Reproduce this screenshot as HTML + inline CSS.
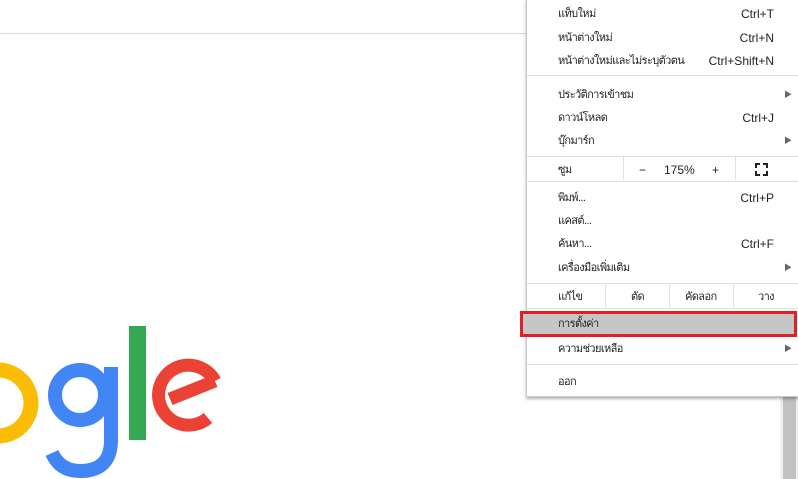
<!DOCTYPE html>
<html><head><meta charset="utf-8"><style>
body{margin:0;width:798px;height:479px;overflow:hidden;background:#fff;position:relative;font-family:"Liberation Sans","Noto Sans CJK SC",sans-serif;font-size:11px;color:#222}
.hl{position:absolute;left:0;top:33px;width:526px;height:1px;background:#dadada}
.sb{position:absolute;left:780px;top:396px;width:18px;height:83px;background:#f0f0f0}
.sb div{position:absolute;left:3px;top:0;width:13px;height:83px;background:#c1c1c1}
.menu{position:absolute;left:526px;top:-1px;width:271px;height:396px;background:#fff;border:1px solid #c8c8c8;box-shadow:0 2px 3px rgba(0,0,0,.3)}
.r{position:absolute;left:31px;right:24px;height:20px;line-height:20px;letter-spacing:-0.6px}
.r .k{position:absolute;right:0;top:0;font-size:12px;letter-spacing:0}
.ar{position:absolute;right:-18px;top:0;font-size:8px;color:#666;letter-spacing:0}
.sep{position:absolute;left:0;right:0;height:1px;background:#e0e0e0}
.vd{position:absolute;width:1px;height:23px;background:#e0e0e0}
.t{position:absolute;line-height:20px;letter-spacing:-0.6px}
.sel{position:absolute;left:520px;top:311px;width:271px;height:20px;border:3px solid #e31e24;background:#c6c6c6}
</style></head><body>
<div class="hl"></div>
<svg style="position:absolute;left:0;top:0" width="240" height="479">
<circle cx="-2" cy="403" r="33" fill="none" stroke="#fbbc05" stroke-width="15"/>
<circle cx="80" cy="395" r="25" fill="none" stroke="#4285f4" stroke-width="14"/>
<path d="M111 367 V440 Q111 471 80 471 Q60 471 52 453" fill="none" stroke="#4285f4" stroke-width="14"/>
<rect x="129" y="326" width="17" height="114" fill="#34a853"/>
<path d="M215 381 L170 399 M208 418 A30 30 0 1 1 215 381" fill="none" stroke="#ea4335" stroke-width="13"/>
</svg>
<div class="sb"><div></div></div>
<div class="menu">
<div class="r" style="top:4px">แท็บใหม่<span class="k">Ctrl+T</span></div>
<div class="r" style="top:28px">หน้าต่างใหม่<span class="k">Ctrl+N</span></div>
<div class="r" style="top:51px">หน้าต่างใหม่และไม่ระบุตัวตน<span class="k">Ctrl+Shift+N</span></div>
<div class="sep" style="top:75px"></div>
<div class="r" style="top:85px">ประวัติการเข้าชม<span class="ar">▶</span></div>
<div class="r" style="top:108px">ดาวน์โหลด<span class="k">Ctrl+J</span></div>
<div class="r" style="top:131px">บุ๊กมาร์ก<span class="ar">▶</span></div>
<div class="sep" style="top:156px"></div>
<div class="r" style="top:160px">ซูม</div>
<div class="vd" style="left:96px;top:157px"></div>
<div class="vd" style="left:208px;top:157px"></div>
<div style="position:absolute;left:112px;top:160px;line-height:20px;font-size:12px">−</div>
<div style="position:absolute;left:137px;top:160px;line-height:20px;font-size:12px">175%</div>
<div style="position:absolute;left:185px;top:160px;line-height:20px;font-size:12px">+</div>
<svg style="position:absolute;left:228px;top:163px" width="13" height="13"><path d="M1 5V1H5M8 1H12V5M12 8V12H8M5 12H1V8" fill="none" stroke="#222" stroke-width="2"/></svg>
<div class="sep" style="top:181px"></div>
<div class="r" style="top:188px">พิมพ์...<span class="k">Ctrl+P</span></div>
<div class="r" style="top:211px">แคสต์...</div>
<div class="r" style="top:234px">ค้นหา...<span class="k">Ctrl+F</span></div>
<div class="r" style="top:258px">เครื่องมือเพิ่มเติม<span class="ar">▶</span></div>
<div class="sep" style="top:283px"></div>
<div class="r" style="top:287px">แก้ไข</div>
<div class="vd" style="left:78px;top:284px"></div>
<div class="vd" style="left:142px;top:284px"></div>
<div class="vd" style="left:206px;top:284px"></div>
<div class="t" style="left:104px;top:287px">ตัด</div>
<div class="t" style="left:158px;top:287px">คัดลอก</div>
<div class="t" style="left:231px;top:287px">วาง</div>
<div class="sep" style="top:308px"></div>
<div class="r" style="top:339px">ความช่วยเหลือ<span class="ar">▶</span></div>
<div class="sep" style="top:364px"></div>
<div class="r" style="top:372px">ออก</div>
</div>
<div class="sel"><div class="t" style="left:35px;top:0">การตั้งค่า</div></div>
</body></html>
